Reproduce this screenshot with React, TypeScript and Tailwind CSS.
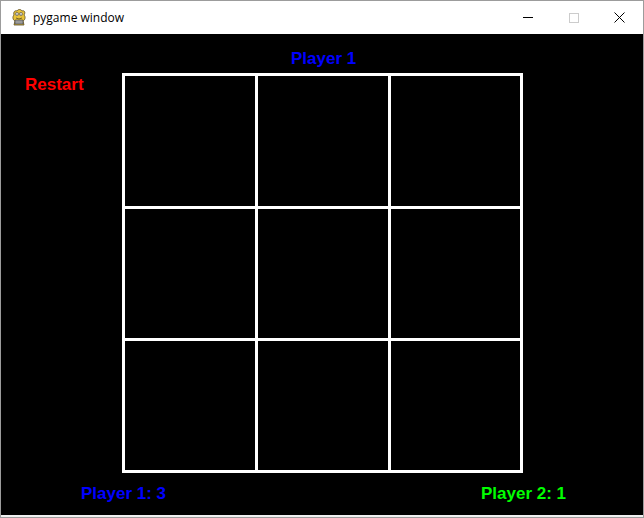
import React from "react";

const font = { fontFamily: '"Liberation Sans", Arial, sans-serif' };

function PygameIcon() {
  return (
    <svg width="16" height="18" viewBox="0 0 16 18">
      <path d="M3 6 C2 3 4 1 6 2 C7 0 10 0 11 2 C13 1 15 3 13 6 C15 8 14 11 12 12 L13 16 L3 16 L4 12 C2 11 1 8 3 6 Z" fill="#e8c33a" stroke="#5a4a20" strokeWidth="0.8" />
      <circle cx="6" cy="5" r="1.6" fill="#fff" stroke="#333" strokeWidth="0.5" />
      <circle cx="10" cy="5" r="1.6" fill="#fff" stroke="#333" strokeWidth="0.5" />
      <circle cx="6" cy="5" r="0.6" fill="#000" />
      <circle cx="10" cy="5" r="0.6" fill="#000" />
      <path d="M4 11 L12 11 L12 15 L4 15 Z" fill="#9a9a9a" stroke="#444" strokeWidth="0.6" />
      <path d="M5 9 Q8 11 11 9" fill="none" stroke="#5a4a20" strokeWidth="0.8" />
    </svg>
  );
}

export default function App() {
  const cells = Array.from({ length: 9 });
  return (
    <div className="w-[644px] h-[518px] border border-[#9c9c9c] bg-white flex flex-col overflow-hidden">
      <div className="h-[33px] flex items-center bg-white shrink-0">
        <div className="pl-[10px] pr-[6px] flex items-center pt-[1px]">
          <PygameIcon />
        </div>
        <span className="text-[12px] text-black leading-none" style={{ fontFamily: '"Open Sans", "Noto Sans", sans-serif' }}>
          pygame window
        </span>
        <div className="ml-auto flex h-full">
          <div className="w-[46px] h-full flex items-center justify-center">
            <div className="w-[10px] h-px bg-black" />
          </div>
          <div className="w-[46px] h-full flex items-center justify-center">
            <div className="w-[10px] h-[10px] border border-[#cccccc]" />
          </div>
          <div className="w-[46px] h-full flex items-center justify-center pr-[2px]">
            <svg width="11" height="11" viewBox="0 0 11 11">
              <path d="M0.5 0.5 L10.5 10.5 M10.5 0.5 L0.5 10.5" stroke="#000" strokeWidth="1" />
            </svg>
          </div>
        </div>
      </div>
      <div className="relative h-[481px] bg-black shrink-0" style={font}>
        <div className="absolute left-[290px] top-[16px] text-[17px] font-bold leading-none text-[#0000ff]">Player 1</div>
        <div className="absolute left-[24px] top-[42px] text-[17px] font-bold leading-none text-[#ff0000]">Restart</div>
        <div className="absolute left-[80px] top-[451px] text-[17px] font-bold leading-none text-[#0000ff]">Player 1: 3</div>
        <div className="absolute left-[480px] top-[451px] text-[17px] font-bold leading-none text-[#00ff00]">Player 2: 1</div>
        <div className="ml-[121px] pt-[39px]">
          <div className="w-[401px] bg-white p-[3px] grid grid-cols-[130px_130px_129px] grid-rows-[130px_129px_129px] gap-[3px]">
            {cells.map((_, i) => (
              <div key={i} className="bg-black" />
            ))}
          </div>
        </div>
      </div>
      <div className="flex-1 bg-[#f0f0f0]" />
    </div>
  );
}
